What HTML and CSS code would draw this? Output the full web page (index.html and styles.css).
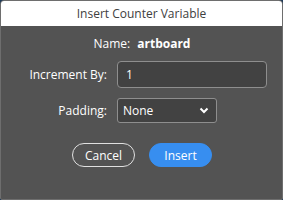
FILE: index.html
```html
<!DOCTYPE html>
<html lang="en">
<head>
    <meta charset="UTF-8">
    <title>Insert Counter Variable</title>
    <link rel="stylesheet" href="styles.css">
</head>
<body>
    <div class="dialog">
        <div class="dialog-title">Insert Counter Variable</div>
        <div class="dialog-body">
            <div class="name-row">
                <span class="name-label">Name:</span>
                <span class="name-value">artboard</span>
            </div>
            <div class="form">
                <label class="form-label" for="increment">Increment By:</label>
                <input class="form-input" type="text" id="increment" value="1">
                <label class="form-label" for="padding">Padding:</label>
                <div class="form-select" id="padding">
                    <span>None</span>
                    <svg width="10" height="7" viewBox="0 0 10 7">
                        <path d="M1.5 1.5 L5 5 L8.5 1.5" fill="none" stroke="#fff" stroke-width="2"/>
                    </svg>
                </div>
            </div>
            <div class="buttons">
                <button class="btn btn-cancel" type="button">Cancel</button>
                <button class="btn btn-insert" type="button">Insert</button>
            </div>
        </div>
    </div>
</body>
</html>
```

FILE: styles.css
```css
* {
    margin: 0;
    padding: 0;
    box-sizing: border-box;
}

body {
    background-color: #1d3a5a;
    font-family: 'Open Sans', 'Noto Sans', sans-serif;
    font-size: 12px;
    color: #fff;
}

.dialog {
    width: 283px;
    height: 200px;
    border: 1px solid #6e6e6e;
    border-radius: 4px 4px 2px 2px;
    background-color: #535353;
    overflow: hidden;
    display: flex;
    flex-direction: column;
}

.dialog-title {
    height: 25px;
    background-color: #fff;
    color: #404040;
    font-size: 12px;
    display: flex;
    align-items: center;
    justify-content: center;
}

.dialog-body {
    flex: 1;
    display: flex;
    flex-direction: column;
}

.name-row {
    display: flex;
    justify-content: center;
    align-items: center;
    gap: 7px;
    height: 35px;
    padding-left: 1px;
}

.name-value {
    font-weight: bold;
}

.form {
    display: grid;
    grid-template-columns: 106px 150px;
    column-gap: 10px;
    row-gap: 10px;
    align-items: center;
}

.form-label {
    text-align: right;
}

.form-input {
    height: 27px;
    border: 1px solid #8e8e8e;
    border-radius: 4px;
    background-color: #424242;
    color: #fff;
    font-family: inherit;
    font-size: 12px;
    padding: 0 8px;
    outline: none;
}

.form-select {
    width: 100px;
    height: 25px;
    border: 1px solid #8e8e8e;
    border-radius: 3px;
    background-color: #424242;
    display: flex;
    align-items: center;
    justify-content: space-between;
    padding: 0 7px 0 5px;
}

.buttons {
    display: flex;
    justify-content: center;
    gap: 14px;
    margin-top: 20px;
    padding-left: 1px;
}

.btn {
    width: 63px;
    height: 24px;
    border-radius: 12px;
    font-family: inherit;
    font-size: 12px;
    color: #fff;
    cursor: pointer;
}

.btn-cancel {
    background: transparent;
    border: 1px solid #e0e0e0;
}

.btn-insert {
    background-color: #378ef0;
    border: 1px solid #378ef0;
}
```
